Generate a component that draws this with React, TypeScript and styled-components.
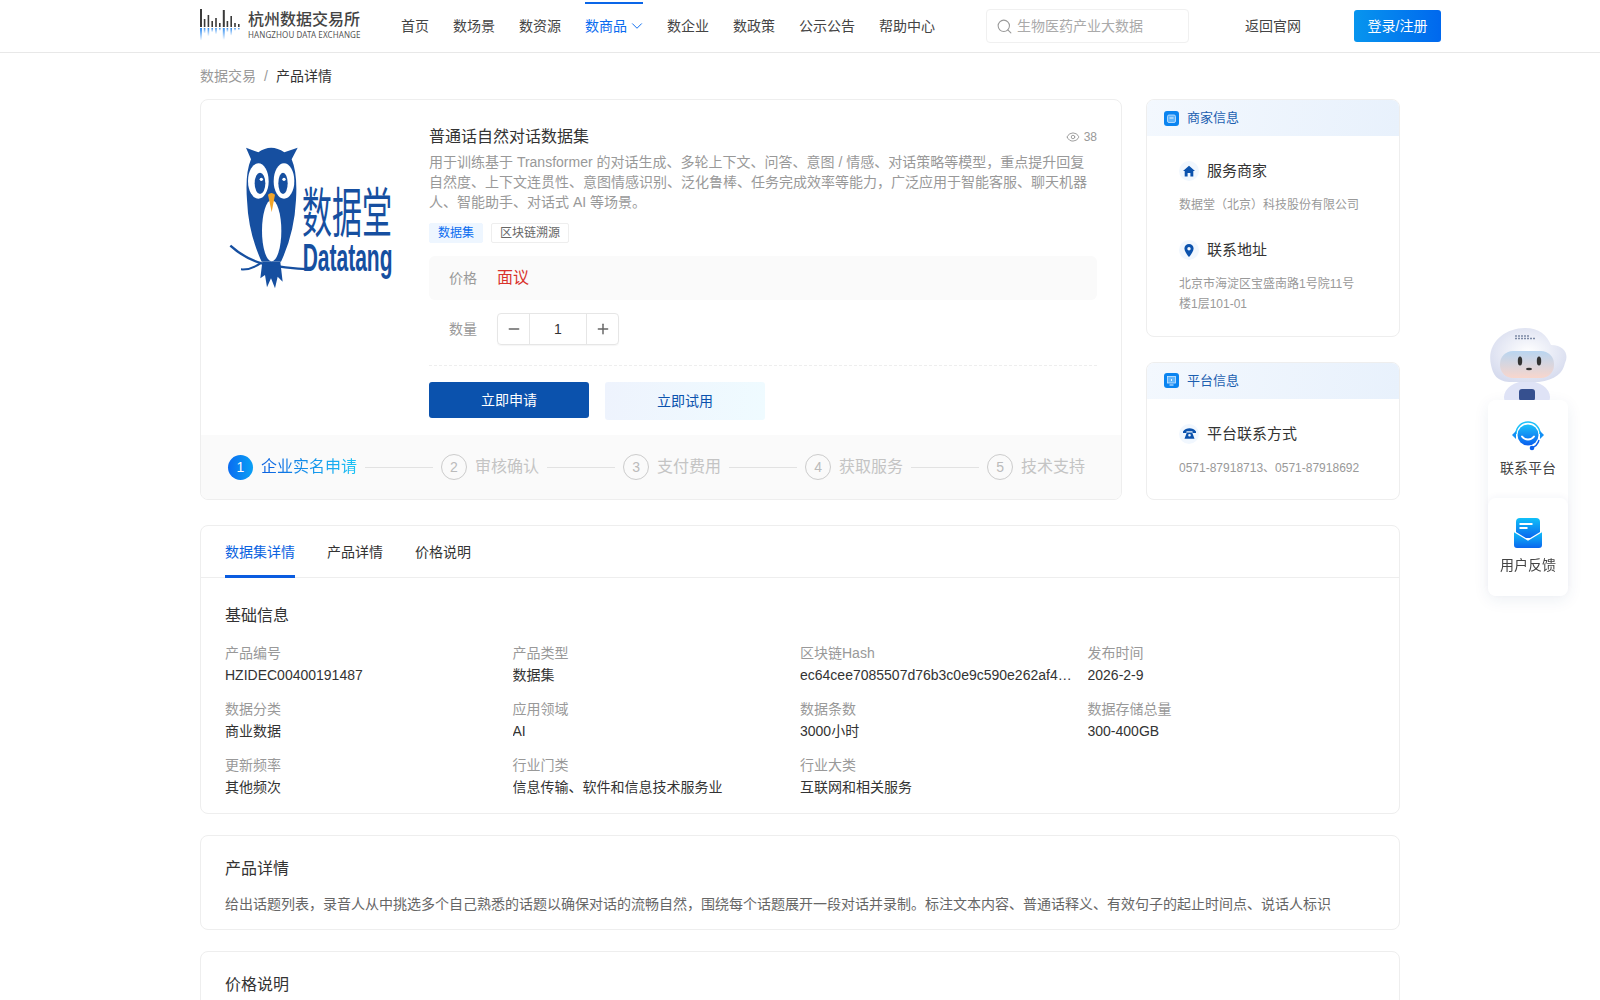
import React from 'react';
import styled, { createGlobalStyle } from 'styled-components';
import { ChevronDown, Eye, Minus, Plus, Search } from 'lucide-react';

const GlobalStyle = createGlobalStyle`
  html, body {
    margin: 0;
    height: 100%;
    overflow: hidden;
    background: #fff;
    font-family: 'Liberation Sans', 'Noto Sans CJK SC', sans-serif;
    font-size: 14px;
    line-height: 22px;
    color: #333;
  }
  * { box-sizing: border-box; }
`;

const navItems = ['首页', '数场景', '数资源', '数商品', '数企业', '数政策', '公示公告', '帮助中心'];
const steps = ['企业实名申请', '审核确认', '支付费用', '获取服务', '技术支持'];
const tabs = ['数据集详情', '产品详情', '价格说明'];
const infoRows = [
  ['产品编号', 'HZIDEC00400191487'],
  ['产品类型', '数据集'],
  ['区块链Hash', 'ec64cee7085507d76b3c0e9c590e262af4d1c7'],
  ['发布时间', '2026-2-9'],
  ['数据分类', '商业数据'],
  ['应用领域', 'AI'],
  ['数据条数', '3000小时'],
  ['数据存储总量', '300-400GB'],
  ['更新频率', '其他频次'],
  ['行业门类', '信息传输、软件和信息技术服务业'],
  ['行业大类', '互联网和相关服务'],
];

const barHeights = [18, 8, 12, 6, 9, 4, 17, 6, 11, 4, 3];

function ExchangeBars() {
  return (
    <BarsSvg width="41" height="32" viewBox="0 0 41 32">
      <defs>
        <linearGradient id="barFade" x1="0" y1="0" x2="0" y2="1">
          <stop offset="0" stopColor="#2f8cf0" />
          <stop offset="1" stopColor="#2f8cf0" stopOpacity="0" />
        </linearGradient>
      </defs>
      {barHeights.map((h, i) => (
        <g key={i}>
          <rect x={i * 3.8} y={18 - h} width={i % 6 === 0 ? 2 : 1.6} height={h} fill="#3a3a3a" />
          <rect x={i * 3.8} y={19} width={i % 6 === 0 ? 2 : 1.6} height={h * 0.7} fill="url(#barFade)" />
        </g>
      ))}
    </BarsSvg>
  );
}

function DatatangLogo() {
  const navy = '#164fa0';
  return (
    <svg width="230" height="220" viewBox="0 0 690 660">
      <path
        d="M135 143 L172 157 Q210 130 250 157 L290 143 L272 178 Q290 220 285 300 Q280 400 240 485 L182 485 Q142 400 138 300 Q132 220 150 178 Z"
        fill={navy}
      />
      <ellipse cx="172" cy="243" rx="31" ry="53" fill="#fff" />
      <ellipse cx="249" cy="243" rx="31" ry="53" fill="#fff" />
      <ellipse cx="177" cy="250" rx="16" ry="32" fill={navy} />
      <ellipse cx="246" cy="250" rx="14" ry="32" fill={navy} />
      <circle cx="181" cy="238" r="5" fill="#fff" />
      <circle cx="249" cy="238" r="5" fill="#fff" />
      <ellipse cx="212" cy="392" rx="29" ry="92" fill="#fff" />
      <path d="M201 284 Q211 274 222 284 L212 336 Z" fill="#f2a52a" />
      <path
        d="M184 486 L178 535 L192 525 L198 562 L210 535 L222 565 L230 530 L245 545 L238 486 Z"
        fill={navy}
      />
      <path d="M88 437 Q130 475 182 490 Q250 505 330 508" fill="none" stroke={navy} strokeWidth="7" />
      <path d="M120 508 Q150 510 178 490" fill="none" stroke={navy} strokeWidth="6" />
      <text
        transform="translate(303 398) scale(1 1.8)"
        fontSize="90"
        fill={navy}
        fontFamily="'Noto Sans CJK SC', sans-serif"
      >
        数据堂
      </text>
      <text
        transform="translate(305 513) scale(1 1.85)"
        fontSize="63"
        fontWeight="700"
        fill={navy}
        fontFamily="'Liberation Sans', sans-serif"
      >
        Datatang
      </text>
    </svg>
  );
}

function ShopBadge() {
  return (
    <svg width="15" height="15" viewBox="0 0 15 15">
      <rect width="15" height="15" rx="3" fill="#0a84f0" />
      <rect x="3.5" y="4" width="8" height="7.500" rx="1.500" fill="#5fb4fa" stroke="#cfe6ff" strokeWidth="0.8" />
      <path d="M5.500 7h4" stroke="#e6f3ff" strokeWidth="1" />
    </svg>
  );
}

function ScreenBadge() {
  return (
    <svg width="15" height="15" viewBox="0 0 15 15">
      <rect width="15" height="15" rx="3" fill="#0a84f0" />
      <rect x="3.5" y="3.5" width="8" height="6.500" fill="#5fb4fa" stroke="#cfe6ff" strokeWidth="0.8" />
      <path d="M5.500 12h4M7.500 6v2" stroke="#e6f3ff" strokeWidth="1" />
    </svg>
  );
}

function HomeGlyph() {
  return (
    <svg width="12" height="12" viewBox="0 0 12 12">
      <path d="M6 .8 12 6h-1.700v5.400H7.400V8H4.600v3.400H1.700V6H0Z" fill="#0b52ad" />
    </svg>
  );
}

function PinGlyph() {
  return (
    <svg width="12" height="13" viewBox="0 0 12 13">
      <path
        fillRule="evenodd"
        d="M6 0a4.600 4.600 0 0 1 4.600 4.600C10.600 8 6 13 6 13S1.400 8 1.400 4.600A4.600 4.600 0 0 1 6 0Zm0 3a1.700 1.700 0 1 0 0 3.400A1.700 1.700 0 0 0 6 3Z"
        fill="#0b52ad"
      />
    </svg>
  );
}

function PhoneGlyph() {
  return (
    <svg width="13" height="11" viewBox="0 0 13 11">
      <path d="M0 3.500C1.500 1 4 .3 6.500 .3S11.500 1 13 3.500L13 5H9.500V3.300H3.500V5H0Z" fill="#0b52ad" />
      <path fillRule="evenodd" d="M3.800 4.500h5.400L11.500 10.700H1.500ZM6.500 6a1.300 1.300 0 1 0 0 2.600 1.300 1.300 0 0 0 0-2.600Z" fill="#0b52ad" />
    </svg>
  );
}

function RobotPicture() {
  return (
    <svg width="82" height="76" viewBox="0 0 82 76">
      <defs>
        <radialGradient id="helmet" cx="0.5" cy="0.45" r="0.6">
          <stop offset="0" stopColor="#ffffff" />
          <stop offset="1" stopColor="#d6dbee" />
        </radialGradient>
        <linearGradient id="visor" x1="0" y1="0" x2="0" y2="1">
          <stop offset="0" stopColor="#b9d5f0" />
          <stop offset="1" stopColor="#f8d6cc" />
        </linearGradient>
      </defs>
      <ellipse cx="40" cy="72" rx="23" ry="16" fill="#dfe3f6" />
      <rect x="32" y="64" width="16" height="12" rx="3" fill="#36508f" />
      <path
        d="M4 40 C-1 18 18 3 38 3 C52 3 60 10 64 20 C78 20 82 30 78 38 C76 48 68 55 52 57 L22 57 C10 56 6 50 4 40Z"
        fill="url(#helmet)"
      />
      <rect x="13" y="26" width="54" height="27" rx="13" fill="url(#visor)" />
      <ellipse cx="33" cy="36" rx="2.200" ry="4.500" fill="#333" />
      <ellipse cx="52" cy="36" rx="2.200" ry="4.500" fill="#333" />
      <ellipse cx="42" cy="44" rx="3" ry="1.200" fill="#333" />
      <path d="M28 11h14M28 13.500h20" stroke="#7d8aa6" strokeWidth="1.300" strokeDasharray="2 1" />
    </svg>
  );
}

function HeadsetIcon() {
  return (
    <svg width="32" height="31" viewBox="0 0 32 31">
      <defs>
        <linearGradient id="headsetFill" x1="0" y1="0" x2="0" y2="1">
          <stop offset="0" stopColor="#1cc0fa" />
          <stop offset="1" stopColor="#0a5fee" />
        </linearGradient>
      </defs>
      <path d="M4 14a12 12 0 0 1 24 0" fill="none" stroke="#1cc0fa" strokeWidth="1.600" />
      <circle cx="16" cy="15" r="10.500" fill="url(#headsetFill)" />
      <path d="M10 16.500c3 4 9 4 12 0" fill="none" stroke="#fff" strokeWidth="2" strokeLinecap="round" />
      <path d="M4 11 0 15l4 4ZM28 11l4 4-4 4Z" fill="#1290f5" />
      <path d="M27 20c-1 4-4 7-8 8" fill="none" stroke="#0a5fee" strokeWidth="1.400" />
      <circle cx="20" cy="28" r="2.300" fill="#0a5fee" />
    </svg>
  );
}

function MailIcon() {
  return (
    <svg width="28" height="30" viewBox="0 0 28 30">
      <defs>
        <linearGradient id="mailFill" x1="0" y1="0" x2="0" y2="1">
          <stop offset="0" stopColor="#10c0f8" />
          <stop offset="1" stopColor="#0a66ee" />
        </linearGradient>
      </defs>
      <rect x="2" y="0" width="24" height="20" rx="4" fill="url(#mailFill)" />
      <path d="M5.500 6h13M5.500 10h8" stroke="#fff" strokeWidth="1.800" />
      <path d="M0 13.500 14 22l14-8.500V27a3 3 0 0 1-3 3H3a3 3 0 0 1-3-3Z" fill="url(#mailFill)" />
      <path d="M0 13.500 14 22l14-8.500" fill="none" stroke="#fff" strokeWidth="1.200" />
    </svg>
  );
}

export default function App() {
  return (
    <>
      <GlobalStyle />
      <Header>
        <LogoBlock>
          <ExchangeBars />
          <LogoText>
            <LogoTitle>杭州数据交易所</LogoTitle>
            <LogoSub>HANGZHOU DATA EXCHANGE</LogoSub>
          </LogoText>
        </LogoBlock>
        <Nav>
          {navItems.map((item) => (
            <NavItem key={item} $active={item === '数商品'}>
              {item}
              {item === '数商品' && <NavChevron size={18} strokeWidth={1.3} />}
            </NavItem>
          ))}
        </Nav>
        <SearchBox>
          <Search size={17} strokeWidth={1.5} color="#999" />
          <span>生物医药产业大数据</span>
        </SearchBox>
        <BackLink>返回官网</BackLink>
        <LoginButton>登录/注册</LoginButton>
      </Header>

      <Main>
        <Breadcrumb>
          <span>数据交易</span>
          <Slash>/</Slash>
          <Current>产品详情</Current>
        </Breadcrumb>

        <TopRow>
          <ProductCard>
            <ProductBody>
              <LogoSlot>
                <DatatangLogo />
              </LogoSlot>
              <ProductInfo>
                <TitleRow>
                  <ProductTitle>普通话自然对话数据集</ProductTitle>
                  <Views>
                    <Eye size={14} strokeWidth={1.6} />
                    38
                  </Views>
                </TitleRow>
                <Description>
                  用于训练基于 Transformer 的对话生成、多轮上下文、问答、意图 / 情感、对话策略等模型，重点提升回复自然度、上下文连贯性、意图情感识别、泛化鲁棒、任务完成效率等能力，广泛应用于智能客服、聊天机器人、智能助手、对话式 AI 等场景。
                </Description>
                <Tags>
                  <Tag $primary>数据集</Tag>
                  <Tag>区块链溯源</Tag>
                </Tags>
                <PriceBox>
                  <FieldLabel>价格</FieldLabel>
                  <Price>面议</Price>
                </PriceBox>
                <QuantityRow>
                  <FieldLabel>数量</FieldLabel>
                  <Stepper>
                    <StepButton><Minus size={16} strokeWidth={2.4} /></StepButton>
                    <StepValue>1</StepValue>
                    <StepButton><Plus size={16} strokeWidth={2.2} /></StepButton>
                  </Stepper>
                </QuantityRow>
                <DashedLine />
                <Actions>
                  <ApplyButton>立即申请</ApplyButton>
                  <TryButton>立即试用</TryButton>
                </Actions>
              </ProductInfo>
            </ProductBody>
            <StepStrip>
              {steps.map((step, i) => (
                <React.Fragment key={step}>
                  {i > 0 && <StepLine />}
                  <StepCircle $active={i === 0}>{i + 1}</StepCircle>
                  <StepLabel $active={i === 0}>{step}</StepLabel>
                </React.Fragment>
              ))}
            </StepStrip>
          </ProductCard>

          <SideColumn>
            <SideCard>
              <SideHeader>
                <ShopBadge />
                商家信息
              </SideHeader>
              <SideBody>
                <SideHeading>
                  <IconDot><HomeGlyph /></IconDot>
                  服务商家
                </SideHeading>
                <SideText>数据堂（北京）科技股份有限公司</SideText>
                <SideHeading $spaced>
                  <IconDot><PinGlyph /></IconDot>
                  联系地址
                </SideHeading>
                <SideText $narrow>北京市海淀区宝盛南路1号院11号楼1层101-01</SideText>
              </SideBody>
            </SideCard>
            <SideCard>
              <SideHeader>
                <ScreenBadge />
                平台信息
              </SideHeader>
              <SideBody>
                <SideHeading>
                  <IconDot><PhoneGlyph /></IconDot>
                  平台联系方式
                </SideHeading>
                <SideText>0571-87918713、0571-87918692</SideText>
              </SideBody>
            </SideCard>
          </SideColumn>
        </TopRow>

        <DetailCard>
          <TabBar>
            {tabs.map((tab, i) => (
              <Tab key={tab} $active={i === 0}>{tab}</Tab>
            ))}
          </TabBar>
          <BasicInfo>
            <SectionTitle>基础信息</SectionTitle>
            <InfoGrid>
              {infoRows.map(([label, value]) => (
                <InfoCell key={label}>
                  <InfoLabel>{label}</InfoLabel>
                  <InfoValue>{value}</InfoValue>
                </InfoCell>
              ))}
            </InfoGrid>
          </BasicInfo>
        </DetailCard>

        <TextCard>
          <SectionTitle>产品详情</SectionTitle>
          <BodyText>
            给出话题列表，录音人从中挑选多个自己熟悉的话题以确保对话的流畅自然，围绕每个话题展开一段对话并录制。标注文本内容、普通话释义、有效句子的起止时间点、说话人标识
          </BodyText>
        </TextCard>

        <TextCard>
          <SectionTitle>价格说明</SectionTitle>
        </TextCard>
      </Main>

      <FloatDock>
        <RobotSpot>
          <RobotPicture />
        </RobotSpot>
        <DockItem>
          <HeadsetIcon />
          联系平台
        </DockItem>
        <DockItem>
          <MailIcon />
          用户反馈
        </DockItem>
      </FloatDock>
    </>
  );
}

const Header = styled.header`
  display: flex;
  align-items: center;
  height: 53px;
  padding-left: 200px;
  border-bottom: 1px solid #e8e8e8;
`;

const LogoBlock = styled.div`
  display: flex;
  align-items: flex-start;
  gap: 7px;
  width: 161px;
  height: 32px;
  margin-top: -2px;
`;

const BarsSvg = styled.svg`
  flex: none;
`;

const LogoText = styled.div`
  display: flex;
  flex-direction: column;
  white-space: nowrap;
  margin-top: 1px;
`;

const LogoTitle = styled.div`
  font-size: 16px;
  line-height: 20px;
  font-weight: 500;
  color: #444;
`;

const LogoSub = styled.div`
  font-size: 8px;
  line-height: 10px;
  letter-spacing: 0.1px;
  color: #555;
  font-family: 'Noto Sans', sans-serif;
`;

const Nav = styled.nav`
  display: flex;
  align-self: stretch;
  gap: 24px;
  margin-left: 40px;
`;

const NavItem = styled.div<{ $active?: boolean }>`
  display: flex;
  align-items: center;
  gap: 1px;
  margin-top: 2px;
  padding-bottom: 4px;
  color: ${(p) => (p.$active ? '#0a6cf0' : '#444')};
  border-top: ${(p) => (p.$active ? '2px solid #0a66e8' : '2px solid transparent')};
`;

const NavChevron = styled(ChevronDown)`
  margin-right: -3px;
`;

const SearchBox = styled.div`
  display: flex;
  align-items: center;
  gap: 4px;
  width: 203px;
  height: 34px;
  margin-left: 51px;
  padding-left: 9px;
  border: 1px solid #f0f0f0;
  border-radius: 4px;
  color: #aaa;
`;

const BackLink = styled.div`
  margin-left: 56px;
  color: #444;
`;

const LoginButton = styled.button`
  width: 87px;
  height: 32px;
  margin-left: 53px;
  border: 0;
  border-radius: 3px;
  color: #fff;
  font: inherit;
  background: linear-gradient(90deg, #0795ee, #0068ee);
`;

const Main = styled.main`
  width: 1200px;
  margin: 0 auto;
`;

const Breadcrumb = styled.div`
  display: flex;
  align-items: center;
  height: 46px;
  color: #999;
`;

const Slash = styled.span`
  margin: 0 8px;
`;

const Current = styled.span`
  color: #333;
`;

const TopRow = styled.div`
  display: grid;
  grid-template-columns: 922px 254px;
  gap: 24px;
  height: 401px;
`;

const ProductCard = styled.section`
  display: flex;
  flex-direction: column;
  border: 1px solid #eee;
  border-radius: 8px;
  overflow: hidden;
`;

const ProductBody = styled.div`
  display: flex;
  flex: 1;
`;

const LogoSlot = styled.div`
  width: 228px;
  flex: none;
`;

const ProductInfo = styled.div`
  width: 668px;
  padding-top: 25px;
`;

const TitleRow = styled.div`
  display: flex;
  align-items: center;
  justify-content: space-between;
  height: 24px;
`;

const ProductTitle = styled.h1`
  margin: 0;
  font-size: 16px;
  line-height: 24px;
  font-weight: 400;
  color: #333;
`;

const Views = styled.div`
  display: flex;
  align-items: center;
  gap: 4px;
  font-size: 12px;
  color: #999;
`;

const Description = styled.p`
  margin: 3px 0 0;
  line-height: 20px;
  color: #999;
`;

const Tags = styled.div`
  display: flex;
  gap: 8px;
  margin-top: 11px;
`;

const Tag = styled.span<{ $primary?: boolean }>`
  height: 20px;
  padding: 0 8px;
  font-size: 12px;
  line-height: 18px;
  border-radius: 2px;
  color: ${(p) => (p.$primary ? '#0a6cf0' : '#666')};
  background: ${(p) => (p.$primary ? '#eef6ff' : '#fff')};
  border: 1px solid ${(p) => (p.$primary ? '#eef6ff' : '#eee')};
`;

const PriceBox = styled.div`
  display: flex;
  align-items: center;
  height: 44px;
  margin-top: 13px;
  padding-left: 20px;
  background: #fafafa;
  border-radius: 6px;
`;

const FieldLabel = styled.span`
  width: 48px;
  color: #999;
`;

const Price = styled.span`
  font-size: 16px;
  color: #d9322c;
`;

const QuantityRow = styled.div`
  display: flex;
  align-items: center;
  height: 31px;
  margin-top: 13px;
  padding-left: 20px;
`;

const Stepper = styled.div`
  display: flex;
  width: 122px;
  height: 32px;
  border: 1px solid #e6e6e6;
  border-radius: 4px;
  box-shadow: 0 1px 1px rgba(0, 0, 0, 0.04);
`;

const StepButton = styled.span`
  display: flex;
  align-items: center;
  justify-content: center;
  width: 31px;
  color: #666;
`;

const StepValue = styled.span`
  flex: 1;
  text-align: center;
  line-height: 30px;
  border-left: 1px solid #e6e6e6;
  border-right: 1px solid #e6e6e6;
`;

const DashedLine = styled.div`
  margin-top: 21px;
  border-top: 1px dashed #eee;
`;

const Actions = styled.div`
  display: flex;
  align-items: flex-start;
  gap: 16px;
  margin-top: 16px;
`;

const ApplyButton = styled.button`
  width: 160px;
  height: 36px;
  border: 0;
  border-radius: 3px;
  font: inherit;
  color: #fff;
  background: #0b52ad;
`;

const TryButton = styled.button`
  width: 160px;
  height: 38px;
  padding-bottom: 2px;
  border: 0;
  border-radius: 3px;
  font: inherit;
  color: #0b52ad;
  background: linear-gradient(100deg, #eef3fd, #effbff);
`;

const StepStrip = styled.div`
  display: flex;
  align-items: center;
  flex: none;
  height: 64px;
  padding-left: 27px;
  background: #fafafa;
`;

const StepCircle = styled.span<{ $active?: boolean }>`
  display: flex;
  align-items: center;
  justify-content: center;
  flex: none;
  width: ${(p) => (p.$active ? '25px' : '26px')};
  height: ${(p) => (p.$active ? '25px' : '26px')};
  border-radius: 50%;
  color: ${(p) => (p.$active ? '#fff' : '#bbb')};
  background: ${(p) => (p.$active ? 'linear-gradient(90deg, #0a6cf0, #0aa0f5)' : 'none')};
  border: ${(p) => (p.$active ? '0' : '1px solid #ccc')};
`;

const StepLabel = styled.span<{ $active?: boolean }>`
  margin-left: 8px;
  font-size: 16px;
  color: #c4c4c4;
  ${(p) =>
    p.$active &&
    `
    background: linear-gradient(90deg, #0a5fe0, #1cc4f5);
    -webkit-background-clip: text;
    background-clip: text;
    color: transparent;
  `}
`;

const StepLine = styled.span`
  flex: none;
  width: 68px;
  height: 1px;
  margin: 0 8px;
  background: #e2e2e2;
`;

const SideColumn = styled.aside`
  display: flex;
  flex-direction: column;
  gap: 25px;
`;

const SideCard = styled.section`
  flex: 1 1 auto;
  border: 1px solid #eee;
  border-radius: 8px;
  overflow: hidden;
`;

const SideHeader = styled.div`
  display: flex;
  align-items: center;
  gap: 8px;
  height: 36px;
  padding-left: 17px;
  font-size: 13px;
  color: #1c5fb0;
  background: linear-gradient(100deg, #f3f8fe, #e8f1fc);
`;

const SideBody = styled.div`
  padding: 25px 24px 20px 32px;
`;

const SideHeading = styled.div<{ $spaced?: boolean }>`
  display: flex;
  align-items: center;
  gap: 8px;
  height: 20px;
  margin-top: ${(p) => (p.$spaced ? '25px' : '0')};
  font-size: 15px;
  color: #333;
  white-space: nowrap;
`;

const IconDot = styled.span`
  display: flex;
  align-items: center;
  justify-content: center;
  width: 20px;
  height: 20px;
  border-radius: 50%;
  background: #f1f7fe;
`;

const SideText = styled.p<{ $narrow?: boolean }>`
  max-width: ${(p) => (p.$narrow ? '180px' : 'none')};
  margin: 14px 0 0;
  font-size: 12px;
  line-height: 20px;
  color: #999;
`;

const DetailCard = styled.section`
  margin-top: 25px;
  border: 1px solid #eee;
  border-radius: 8px;
`;

const TabBar = styled.div`
  display: flex;
  gap: 32px;
  height: 52px;
  padding-left: 24px;
  border-bottom: 1px solid #eee;
`;

const Tab = styled.div<{ $active?: boolean }>`
  display: flex;
  align-items: center;
  height: 52px;
  padding-top: 2px;
  color: ${(p) => (p.$active ? '#0a62e0' : '#333')};
  border-bottom: 3px solid ${(p) => (p.$active ? '#0a5ce0' : 'transparent')};
`;

const BasicInfo = styled.div`
  padding: 26px 24px 15px;
`;

const SectionTitle = styled.h2`
  margin: 0;
  font-size: 16px;
  line-height: 24px;
  font-weight: 400;
  color: #333;
`;

const InfoGrid = styled.div`
  display: grid;
  grid-template-columns: repeat(4, 287.5px);
  row-gap: 12px;
  margin-top: 14px;
`;

const InfoCell = styled.div`
  min-width: 0;
  padding-right: 15px;
`;

const InfoLabel = styled.div`
  line-height: 22px;
  color: #999;
`;

const InfoValue = styled.div`
  line-height: 22px;
  color: #333;
  white-space: nowrap;
  overflow: hidden;
  text-overflow: ellipsis;
`;

const TextCard = styled.section`
  margin-top: 21px;
  padding: 21px 24px 14px;
  border: 1px solid #eee;
  border-radius: 8px;
`;

const BodyText = styled.p`
  margin: 12px 0 0;
  line-height: 22px;
  color: #666;
`;

const FloatDock = styled.div`
  position: fixed;
  top: 400px;
  left: 1488px;
  width: 80px;
  border-radius: 8px;
  box-shadow: 0 4px 16px rgba(30, 60, 120, 0.08);
  background: #fff;
`;

const RobotSpot = styled.div`
  position: absolute;
  top: -75px;
  left: -1px;
  filter: blur(0.5px);
`;

const DockItem = styled.div`
  position: relative;
  display: flex;
  flex-direction: column;
  align-items: center;
  gap: 6px;
  height: 98px;
  padding-top: 20px;
  color: #444;
  background: #fff;
  border-radius: 8px;
  & + & {
    box-shadow: 0 -2px 6px rgba(30, 60, 120, 0.04);
  }
`;
